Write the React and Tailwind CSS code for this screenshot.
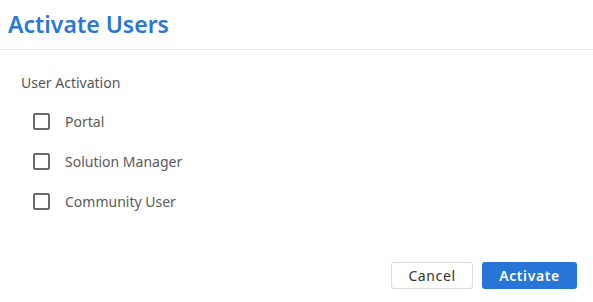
import React, { useState } from 'react';

const options = ['Portal', 'Solution Manager', 'Community User'];

const App = () => {
  const [checked, setChecked] = useState({});

  const toggle = (name) => setChecked((c) => ({ ...c, [name]: !c[name] }));

  return (
    <div className="w-[593px] h-[302px] bg-white flex flex-col font-['Noto_Sans',sans-serif]">
      {/* Header */}
      <div className="h-[50px] border-b border-[#e6e6e6] pl-[8px] flex items-center">
        <h1 className="text-[23px] leading-none font-semibold text-[#2a78d6]">Activate Users</h1>
      </div>

      {/* Body */}
      <div className="flex-1 pl-[21px] pt-[24px]">
        <div className="text-[14px] leading-[18px] text-[#555]">User Activation</div>
        <div className="mt-[20px] pl-[12px] flex flex-col gap-[22px]">
          {options.map((opt) => (
            <label key={opt} className="flex items-center h-[18px] cursor-pointer">
              <span
                onClick={() => toggle(opt)}
                className={`w-[17px] h-[17px] border-2 border-[#6b6b6b] rounded-[2px] ${checked[opt] ? 'bg-[#2a78d6] border-[#2a78d6]' : 'bg-white'}`}
              ></span>
              <span className="ml-[15px] text-[14px] text-[#5a5a5a]">{opt}</span>
            </label>
          ))}
        </div>
      </div>

      {/* Footer */}
      <div className="flex justify-end gap-[9px] pr-[16px] pb-[13px]">
        <button className="w-[82px] h-[27px] border border-[#dcdcdc] rounded-[3px] bg-white text-[14px] text-[#333] tracking-[0.6px]">
          Cancel
        </button>
        <button className="w-[95px] h-[27px] rounded-[3px] bg-[#2775d6] text-[14px] font-semibold text-white tracking-[0.6px]">
          Activate
        </button>
      </div>
    </div>
  );
};

export default App;
